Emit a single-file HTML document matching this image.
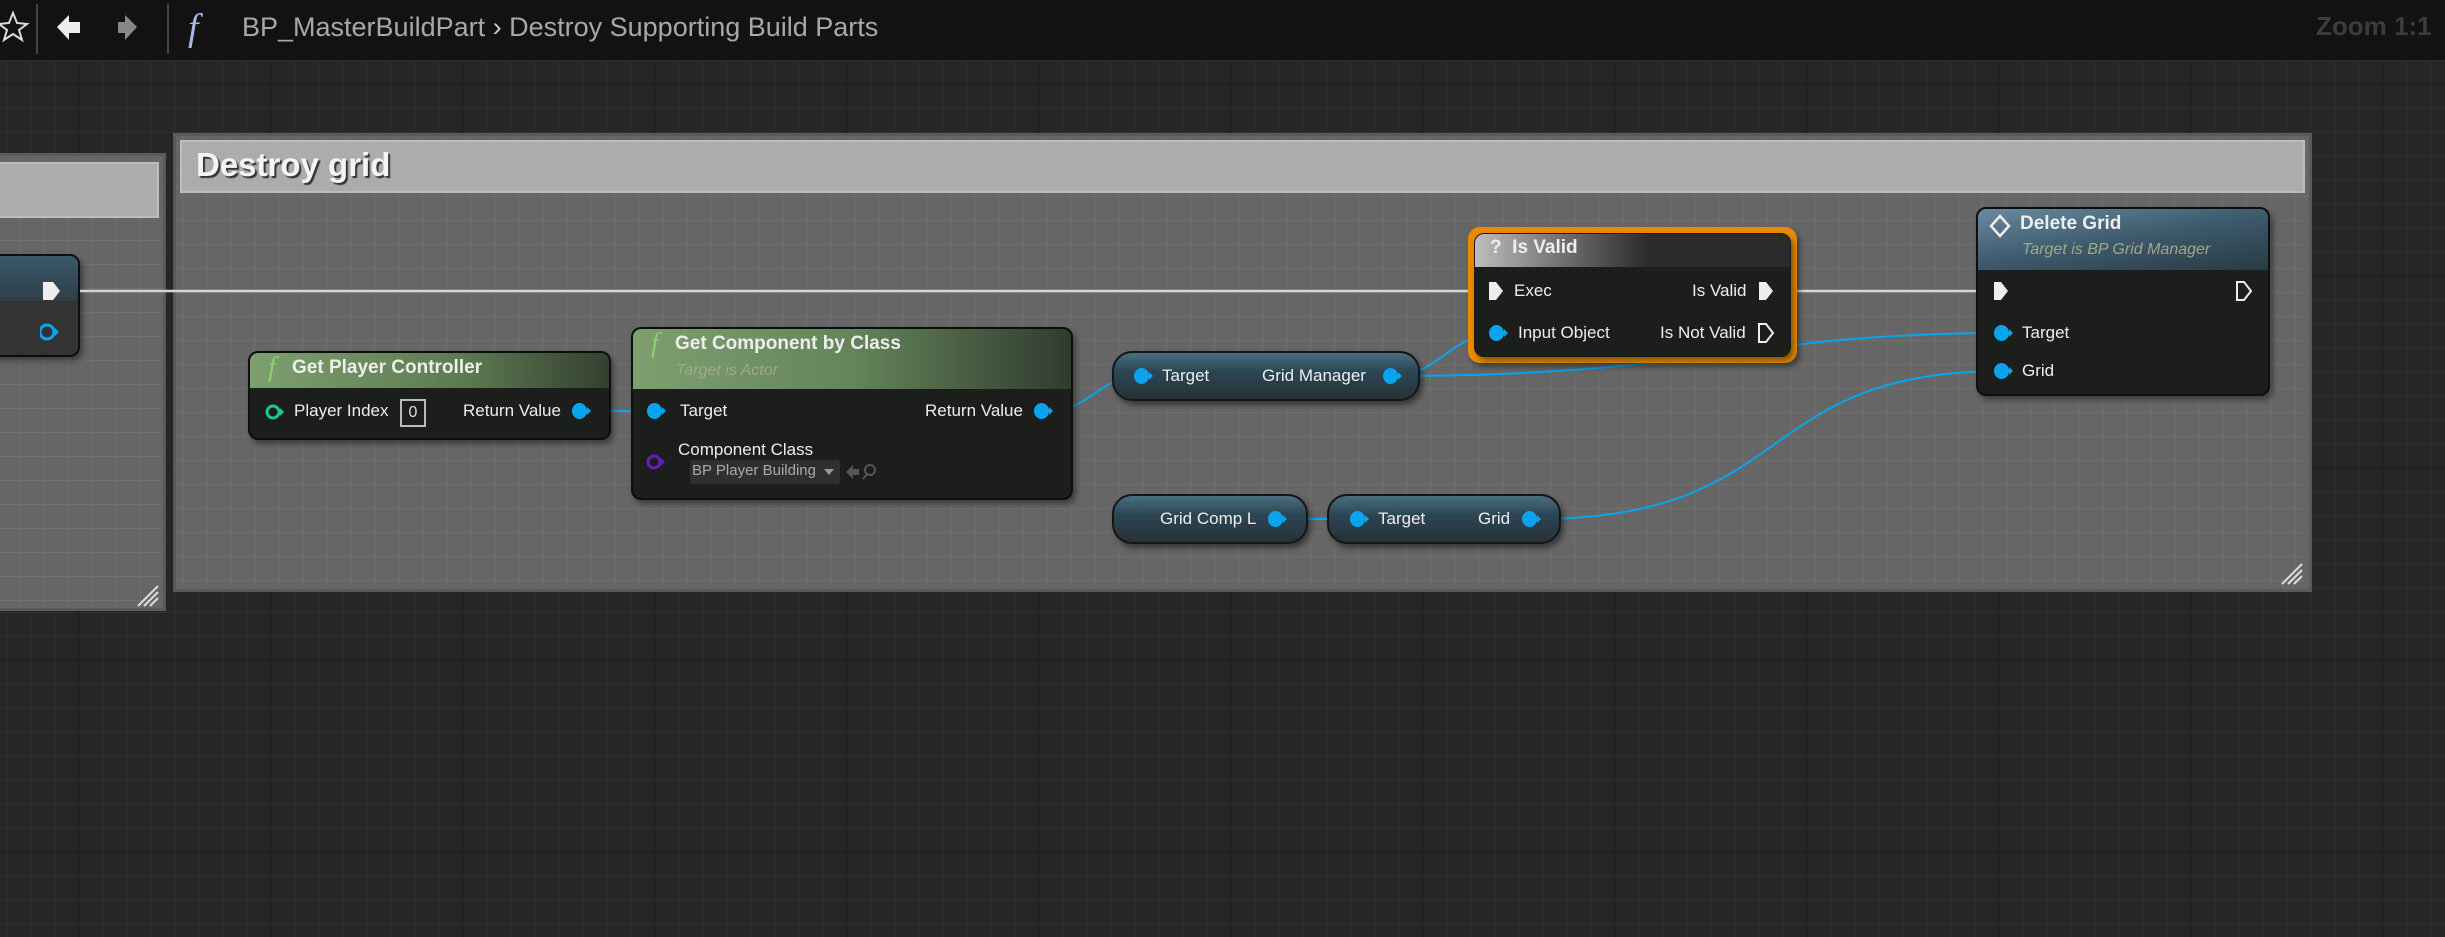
<!DOCTYPE html>
<html><head><meta charset="utf-8"><style>
*{margin:0;padding:0;box-sizing:border-box}
body{width:2445px;height:937px;overflow:hidden;background:#262626;font-family:"Liberation Sans",sans-serif;position:relative;color:#fff}
.grid{position:absolute;inset:0;background:
linear-gradient(90deg,#1d1d1d 1px,transparent 1px) 78px 0/192px 192px,
linear-gradient(0deg,#1d1d1d 1px,transparent 1px) 0 85px/192px 192px,
linear-gradient(90deg,#303030 1px,transparent 1px) 6px 0/24px 24px,
linear-gradient(0deg,#303030 1px,transparent 1px) 0 13px/24px 24px,#262626}
.tb{position:absolute;left:0;top:0;width:2445px;height:61px;background:rgba(14,14,14,.8);border-bottom:1px solid #2e2e2e}
.abs{position:absolute}
.cbody{position:absolute;background:
linear-gradient(90deg,rgba(255,255,255,.06) 1px,transparent 1px) 6px 0/24px 24px,
linear-gradient(0deg,rgba(255,255,255,.06) 1px,transparent 1px) 0 13px/24px 24px,#666;box-shadow:0 0 0 3px #5a5a5a}
.chead{position:absolute;background:#acacac;border:2px solid #bdbdbd}
.node{position:absolute;background:#1c1e1c;border-radius:10px;border:2px solid #0e0e0e;box-shadow:3px 4px 6px rgba(0,0,0,.4);overflow:hidden}
.hd{position:absolute;left:0;right:0;top:0}
.t{position:absolute;font-size:17px;white-space:nowrap;color:#eee}
.b{font-weight:bold;font-size:19px}
.sub{font-style:italic;color:#a0a88a;font-size:16px}
.pill{position:absolute;border-radius:20px;border:2px solid #151515;background:linear-gradient(#4a6f82 0%,#2c4654 40%,#283138 100%);box-shadow:3px 4px 6px rgba(0,0,0,.45)}
.dot{position:absolute;width:15px;height:16px;border-radius:50%;background:#0aa4ee}
.dot:after{content:"";position:absolute;right:-4px;top:4px;border-left:4px solid #0aa4ee;border-top:4px solid transparent;border-bottom:4px solid transparent}
</style></head><body>
<div class="grid"></div>
<div class="tb"></div>
<svg class="abs" style="left:0;top:0" width="240" height="61">
<path d="M13 13 L17 23 L27 24 L19 30 L22 40 L13 34 L4 40 L7 30 L-1 24 L9 23Z" fill="none" stroke="#ddd" stroke-width="2"/>
<line x1="37" y1="4" x2="37" y2="54" stroke="#444" stroke-width="2"/>
<path d="M57 27 L69 15 L69 22 L80 22 L80 33 L69 33 L69 40Z" fill="#eee"/>
<path d="M137 27 L125 15 L125 22 L118 22 L118 33 L125 33 L125 40Z" fill="#888"/>
<line x1="168" y1="4" x2="168" y2="54" stroke="#444" stroke-width="2"/>
<text x="188" y="40" font-family="Liberation Serif" font-style="italic" font-size="38" fill="#a8b8e8">f</text>
</svg>
<div class="t" style="left:242px;top:12px;font-size:27px;color:#a8a8a8">BP_MasterBuildPart <span style="color:#ccc">›</span> Destroy Supporting Build Parts</div>
<div class="t b" style="left:2316px;top:11px;font-size:26px;color:#3c3c3c">Zoom 1:1</div>

<div class="cbody" style="left:-10px;top:156px;width:173px;height:452px"></div>
<div class="chead" style="left:-10px;top:162px;width:169px;height:56px"></div>
<div class="cbody" style="left:176px;top:136px;width:2133px;height:453px"></div>
<div class="chead" style="left:180px;top:140px;width:2125px;height:53px"></div>
<div class="t b" style="left:196px;top:146px;font-size:33px;color:#f4f4f4;text-shadow:2px 2px 1px #333">Destroy grid</div>
<svg class="abs" style="left:0;top:0" width="2445" height="937">
<g stroke="#ddd" stroke-width="2"><path d="M138 606 L158 586 M144 606 L158 592 M150 606 L158 598"/><path d="M2282 584 L2302 564 M2288 584 L2302 570 M2294 584 L2302 576"/></g>
</svg>

<div class="node" style="left:-20px;top:254px;width:100px;height:103px;background:#333">
<div class="hd" style="height:45px;background:linear-gradient(#3a5868,#2e3f48)"></div></div>
<svg class="abs" style="left:40px;top:280px" width="30" height="80"><path d="M3 2 L13 2 L20 11 L13 20 L3 20Z" fill="#eee"/><circle cx="7" cy="52" r="7" fill="none" stroke="#0aa4ee" stroke-width="3"/><path d="M15 48 L19 52 L15 56Z" fill="#0aa4ee"/></svg>

<svg class="abs" style="left:0;top:0" width="2445" height="937" fill="none">
<path d="M80 291 H1470 M1793 291 H1977" stroke="#d4d4d4" stroke-width="2.5"/>
<g stroke="#0aa4ee" stroke-width="2">
<path d="M584 411 C620 411 620 411 658 411"/>
<path d="M1048 411 C1090 411 1100 376 1140 376"/>
<path d="M1392 376 C1440 376 1450 333 1500 333"/>
<path d="M1392 376 C1700 376 1750 333 2003 333"/>
<path d="M1281 519 H1356"/>
<path d="M1535 519 C1800 519 1750 371 2003 371"/>
</g></svg>

<div class="node" style="left:248px;top:351px;width:363px;height:89px">
<div class="hd" style="height:35px;background:linear-gradient(90deg,#7ea070,#5c7a52 60%,#34402f)"></div></div>
<div class="t" style="left:268px;top:352px;font-family:'Liberation Serif';font-style:italic;font-size:28px;color:#8cd070">f</div>
<div class="t b" style="left:292px;top:357px">Get Player Controller</div>
<svg class="abs" style="left:264px;top:402px" width="22" height="20"><circle cx="9" cy="10" r="6" fill="none" stroke="#1fc49a" stroke-width="3"/><path d="M16 6 L20 10 L16 14Z" fill="#1fc49a"/></svg>
<div class="t" style="left:294px;top:401px">Player Index</div>
<div class="abs" style="left:400px;top:399px;width:26px;height:28px;border:2px solid #bbb;font-size:16px;text-align:center;line-height:24px;color:#ddd">0</div>
<div class="t" style="left:463px;top:401px">Return Value</div>
<div class="dot" style="left:572px;top:403px"></div>

<div class="node" style="left:631px;top:327px;width:442px;height:173px">
<div class="hd" style="height:60px;background:linear-gradient(90deg,#7ea070,#64845a 50%,#303c2e)"></div></div>
<div class="t" style="left:651px;top:328px;font-family:'Liberation Serif';font-style:italic;font-size:28px;color:#8cd070">f</div>
<div class="t b" style="left:675px;top:333px">Get Component by Class</div>
<div class="t sub" style="left:676px;top:362px">Target is Actor</div>
<div class="dot" style="left:647px;top:403px"></div>
<div class="t" style="left:680px;top:401px">Target</div>
<div class="t" style="left:925px;top:401px">Return Value</div>
<div class="dot" style="left:1034px;top:403px"></div>
<svg class="abs" style="left:645px;top:452px" width="22" height="20"><circle cx="9" cy="10" r="6" fill="none" stroke="#6020c0" stroke-width="3"/><path d="M16 6 L20 10 L16 14Z" fill="#6020c0"/></svg>
<div class="t" style="left:678px;top:440px">Component Class</div>
<div class="abs" style="left:690px;top:460px;width:150px;height:24px;background:#2e302e;border-radius:3px"></div>
<div class="t" style="left:692px;top:462px;font-size:15px;color:#aaa;width:128px;overflow:hidden">BP Player Building</div>
<svg class="abs" style="left:822px;top:460px" width="70" height="24"><path d="M2 9 L12 9 L7 15Z" fill="#999"/><path d="M24 12 L31 5 L31 9 L37 9 L37 15 L31 15 L31 19Z" fill="#555"/><circle cx="48" cy="10" r="5" fill="none" stroke="#555" stroke-width="2"/><line x1="45" y1="14" x2="41" y2="19" stroke="#555" stroke-width="2"/></svg>

<div class="pill" style="left:1112px;top:351px;width:308px;height:50px"></div>
<div class="dot" style="left:1134px;top:368px"></div>
<div class="t" style="left:1162px;top:366px">Target</div>
<div class="t" style="left:1262px;top:366px">Grid Manager</div>
<div class="dot" style="left:1383px;top:368px"></div>

<div class="abs" style="left:1468px;top:227px;width:329px;height:136px;border-radius:12px;background:#e98a00;box-shadow:3px 4px 6px rgba(0,0,0,.4)"></div>
<div class="node" style="left:1474px;top:233px;width:317px;height:124px;border:1px solid #1a1a1a">
<div class="hd" style="height:33px;background:linear-gradient(90deg,#bdbdbd,#6a6a6a 30%,#2b2b2b 55%)"></div></div>
<div class="t b" style="left:1490px;top:237px">?&nbsp; Is Valid</div>
<svg class="abs" style="left:1487px;top:280px" width="20" height="22"><path d="M2 2 L9 2 L16 11 L9 20 L2 20Z" fill="#eee"/></svg>
<div class="t" style="left:1514px;top:281px">Exec</div>
<div class="t" style="left:1692px;top:281px">Is Valid</div>
<svg class="abs" style="left:1757px;top:280px" width="20" height="22"><path d="M2 2 L9 2 L16 11 L9 20 L2 20Z" fill="#eee"/></svg>
<div class="dot" style="left:1489px;top:325px"></div>
<div class="t" style="left:1518px;top:323px">Input Object</div>
<div class="t" style="left:1660px;top:323px">Is Not Valid</div>
<svg class="abs" style="left:1757px;top:322px" width="20" height="22"><path d="M2 2 L9 2 L16 11 L9 20 L2 20Z" fill="none" stroke="#eee" stroke-width="2"/></svg>

<div class="node" style="left:1976px;top:207px;width:294px;height:189px">
<div class="hd" style="height:61px;background:linear-gradient(170deg,#6a8aa0,#3d5a6c 50%,#2a3a44)"></div></div>
<svg class="abs" style="left:1988px;top:214px" width="24" height="24"><path d="M12 2 L21 12 L12 22 L3 12Z" fill="none" stroke="#eee" stroke-width="2.5"/></svg>
<div class="t b" style="left:2020px;top:213px">Delete Grid</div>
<div class="t sub" style="left:2022px;top:241px">Target is BP Grid Manager</div>
<svg class="abs" style="left:1992px;top:280px" width="20" height="22"><path d="M2 2 L9 2 L16 11 L9 20 L2 20Z" fill="#eee"/></svg>
<svg class="abs" style="left:2235px;top:280px" width="20" height="22"><path d="M2 2 L9 2 L16 11 L9 20 L2 20Z" fill="none" stroke="#eee" stroke-width="2"/></svg>
<div class="dot" style="left:1994px;top:325px"></div>
<div class="t" style="left:2022px;top:323px">Target</div>
<div class="dot" style="left:1994px;top:363px"></div>
<div class="t" style="left:2022px;top:361px">Grid</div>

<div class="pill" style="left:1112px;top:494px;width:196px;height:50px"></div>
<div class="t" style="left:1160px;top:509px">Grid Comp L</div>
<div class="dot" style="left:1268px;top:511px"></div>
<div class="pill" style="left:1327px;top:494px;width:234px;height:50px"></div>
<div class="dot" style="left:1350px;top:511px"></div>
<div class="t" style="left:1378px;top:509px">Target</div>
<div class="t" style="left:1478px;top:509px">Grid</div>
<div class="dot" style="left:1522px;top:511px"></div>
</body></html>
